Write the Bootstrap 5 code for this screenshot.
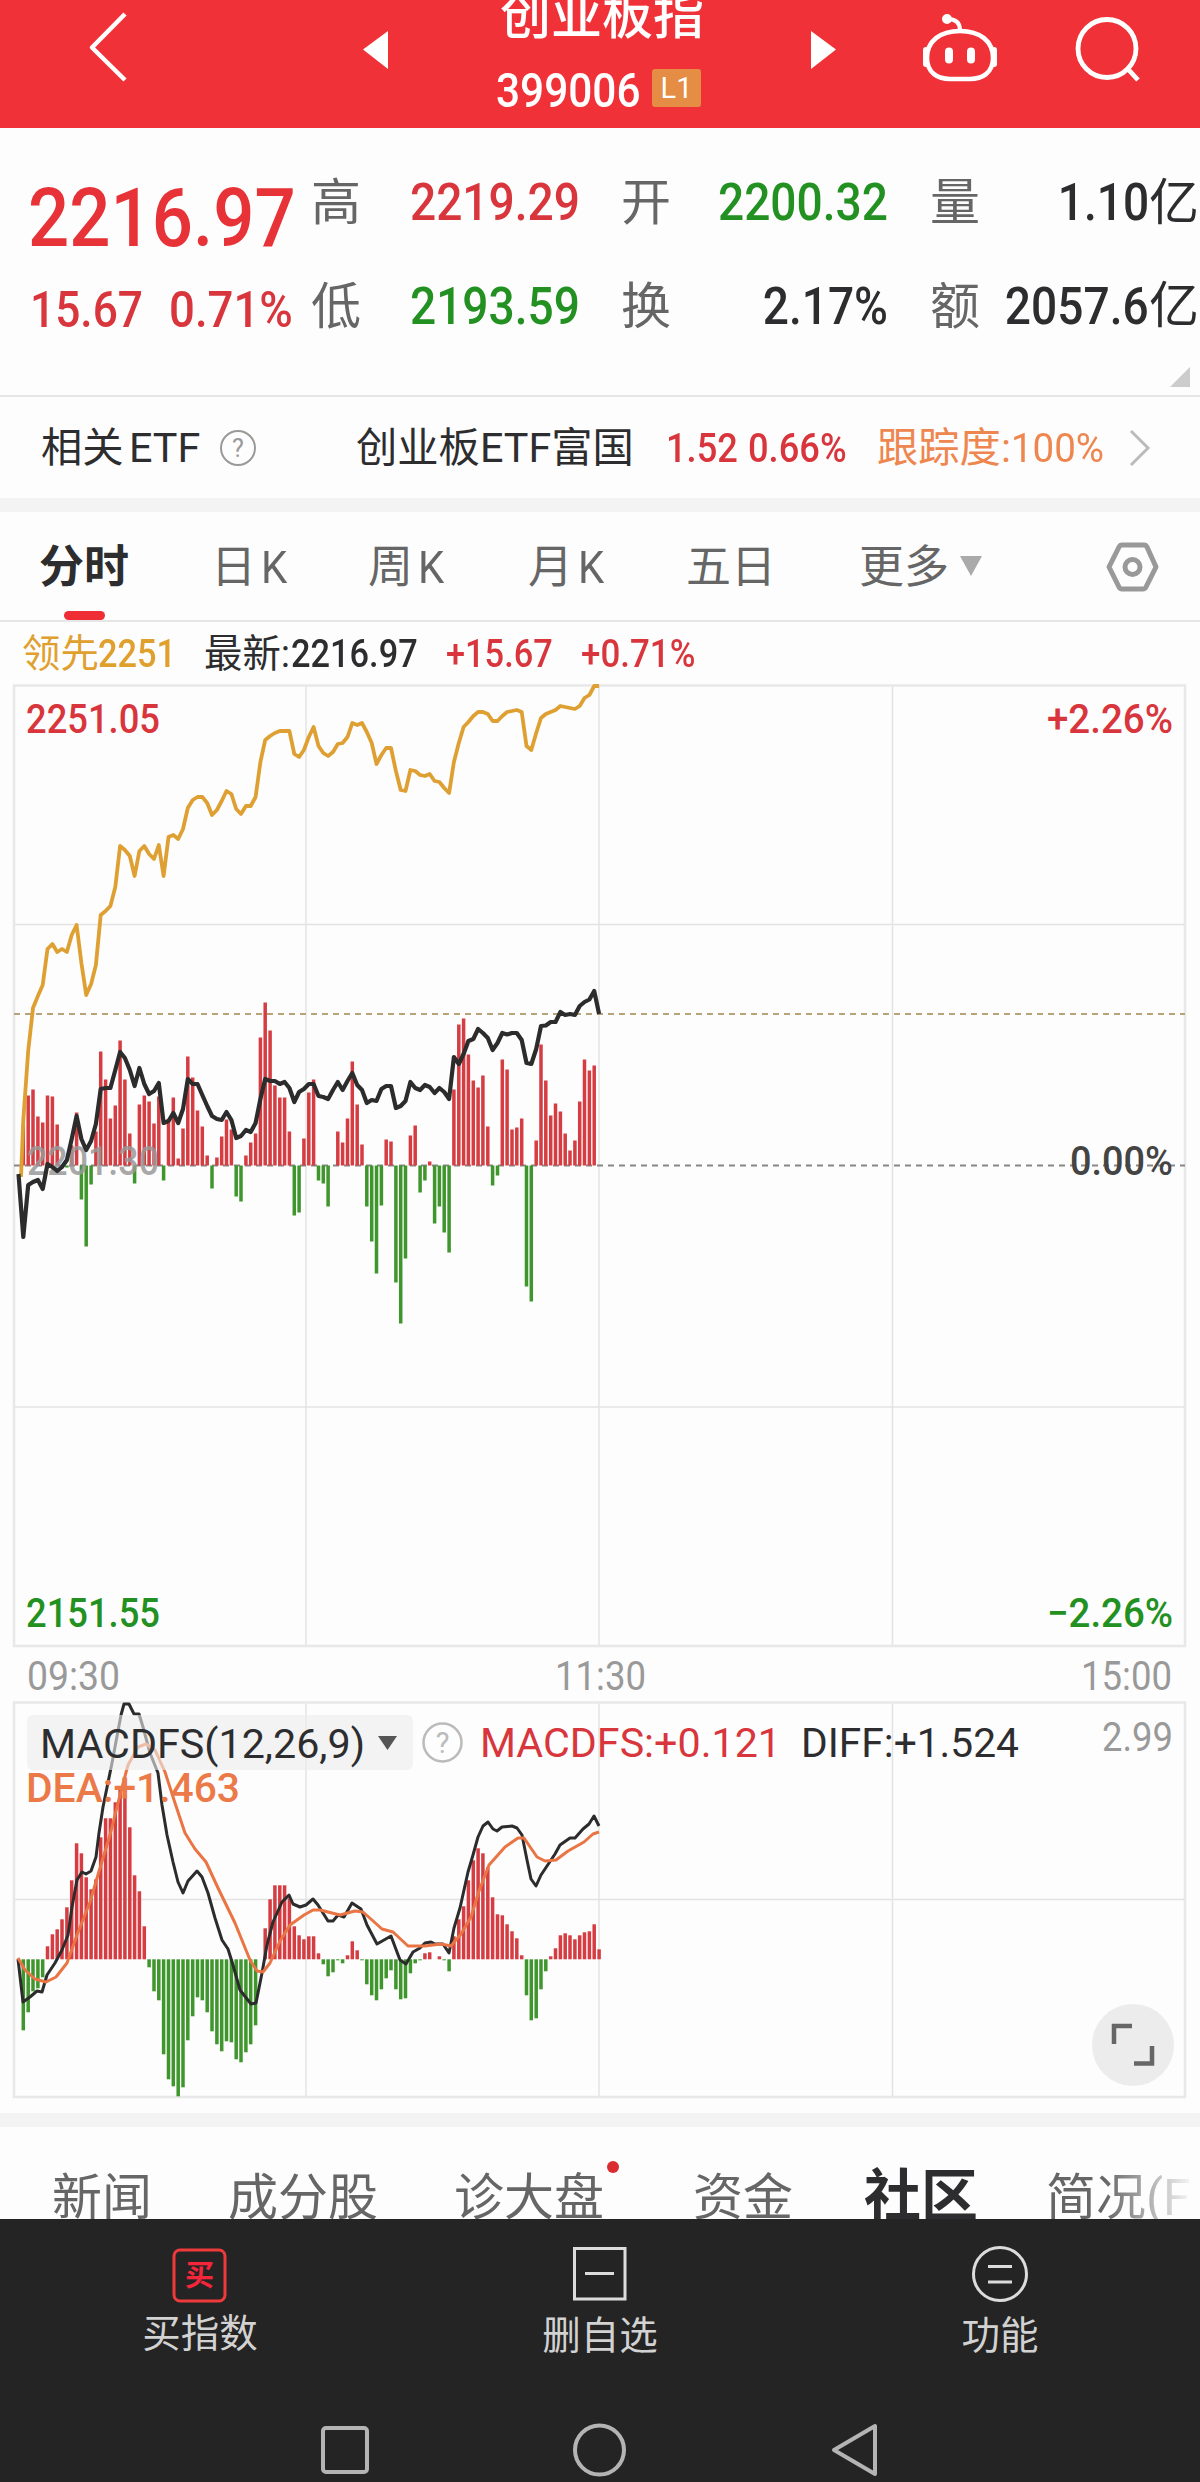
<!DOCTYPE html>
<html lang="zh-CN">
<head>
<meta charset="utf-8">
<meta name="viewport" content="width=device-width, initial-scale=1">
<title>创业板指 399006</title>
<link href="https://cdn.jsdelivr.net/npm/bootstrap@5.3.0/dist/css/bootstrap.min.css" rel="stylesheet">
<style>
body{width:1200px;height:2482px;overflow:hidden;background:#fdfdfd;font-family:Roboto,"Noto Sans CJK SC",sans-serif;line-height:1;color:#2d2d2f;white-space:nowrap}
svg{display:block;flex:none;overflow:visible}
svg text{font-family:Roboto,"Noto Sans CJK SC",sans-serif}
.up{color:#d8363c}.down{color:#239022}.dim{color:#666}.amber{color:#e0a02e}.coral{color:#ee8650}
.din{display:inline-block;transform:scaleX(.895);transform-origin:left center;font-weight:500}
.din-end{transform-origin:right center}
.topbar{height:128px;background:#f03238;color:#fff;display:grid;grid-template-columns:90px 273px 133px 205px 110px 118px 1fr}
.title-name{font-size:51px;font-weight:500;height:60px;margin-top:-11px;line-height:56px}
.title-code{font-size:49px;height:40px;line-height:44px;margin-top:20px}
.title-code .din{transform:scaleX(.865);font-weight:500;width:156px}
.lv{width:53px;height:38px;background:#e58c45;font-size:29px;line-height:39px;border-radius:3px;text-align:center}
.quote{height:269px;border-bottom:2px solid #e6e6e6;padding:23px 1px 0 28px;display:grid;grid-template-columns:283px 50px 219px 41px 50px 217px 42px 50px 1fr;grid-template-rows:104px 104px;align-items:center}
.quote .val{font-size:51.5px;text-align:right}
.quote .lab{font-size:50px;color:#666}
.quote .yi{font-size:50px}
.big{font-size:82px;height:52px;color:#e73337}
.big .din{transform:scaleX(.885)}
.chg{font-size:49.5px;padding:8px 0 0 2px}
.etf{height:101px;padding:2px 0 0 41px;display:grid;grid-template-columns:88px 92px 135px 310px 82px 129px 253px 1fr;align-items:center;font-size:41.3px}
.etf .din{font-size:40.500px}
.band{height:14px;background:#f3f3f3}
.periods{height:110px;border-bottom:2px solid #e6e6e6;padding:2px 0 0 39px;display:grid;grid-template-columns:172px 157px 160px 158px 173px 101px 146px 1fr;align-items:center;font-size:45px;color:#666}
.periods>.cur{color:#2d2d2f;font-weight:700;position:relative}
.periods>.cur::after{content:"";position:absolute;left:25px;top:66px;width:41px;height:9px;border-radius:5px;background:#ee2d34}
.periods .kk{margin-left:5px;display:inline-block;transform:scaleX(.93);transform-origin:left}
.legendbar{height:61px;padding:4px 0 0 22px;display:grid;grid-template-columns:76px 106px 92px 150px 135px 1fr;align-items:center;font-size:38.400px}
.sections{height:92px;overflow:hidden;padding:43px 0 0 52px;display:grid;grid-template-columns:176px 226px 239px 171px 182px 1fr;font-size:50px;color:#666;position:relative}
.sections>div{line-height:56px}
.sections .cur{font-size:57px;font-weight:700;color:#2d2d2f;line-height:53px}
.fade-tail{background:linear-gradient(90deg,#666 38%,#fdfdfd 97%);-webkit-background-clip:text;background-clip:text;color:transparent}
.reddot{position:absolute;left:607px;top:34px;width:12px;height:12px;border-radius:50%;background:#d92b30}
.actions{height:170px;background:#242424;color:#d2d2d2;font-size:38.5px;padding-top:26px}
.actions .lbl{margin-top:10px}
.actions .lbl-low{margin-top:12px}
.sysnav{height:93px;background:#242424}
</style>
<script src="https://cdn.jsdelivr.net/npm/bootstrap@5.3.0/dist/js/bootstrap.bundle.min.js"></script>
</head>
<body>
<header class="topbar">
  <div></div>
  <svg width="40" height="100" fill="none" stroke="#fff" stroke-width="4.5" stroke-linejoin="round"><path d="M35 14L2 47.500L35 80"/></svg>
  <svg width="26" height="100"><path d="M0 49.500L25 31V69Z" fill="#fff"/></svg>
  <div>
    <div class="title-name ps-1">创业板指</div>
    <div class="title-code d-flex"><span class="din">399006</span><span class="lv">L1</span></div>
  </div>
  <svg style="margin-left:110px" width="26" height="100"><path d="M0 31L25 49.500L0 69Z" fill="#fff"/></svg>
  <svg style="margin-left:107px" width="84" height="100" viewBox="921 0 84 100" fill="none" stroke="#fff"><path d="M963 31c20 0 33 10 33 27 0 15-11 21-23 21H953c-12 0-23-6-23-21 0-17 13-27 33-27Z" stroke-width="4.500"/><path d="M950 19q13 0 13 11" stroke-width="4"/><circle cx="950" cy="19" r="3" fill="#fff" stroke-width="4"/><path d="M952 51.500v8M974 51.500v8" stroke-width="8" stroke-linecap="round"/><path d="M929 50v14M997 50v14" stroke-width="6" stroke-linecap="round"/></svg>
  <svg style="margin-left:147px" width="64" height="100" viewBox="1071 0 64 100" fill="none" stroke="#fff" stroke-width="4.800"><circle cx="1102" cy="48.500" r="29"/><path d="M1122 68L1133 80"/></svg>
</header>

<section class="quote">
  <div class="big"><span class="din">2216.97</span></div>
  <div class="lab">高</div><div class="val up"><span class="din din-end">2219.29</span></div><i></i>
  <div class="lab">开</div><div class="val down"><span class="din din-end">2200.32</span></div><i></i>
  <div class="lab">量</div><div class="val"><span class="din din-end">1.10</span><span class="yi">亿</span></div>
  <div class="chg up d-flex"><span class="din" style="width:139px">15.67</span><span class="din" style="transform:scaleX(.92)">0.71%</span></div>
  <div class="lab">低</div><div class="val down"><span class="din din-end">2193.59</span></div><i></i>
  <div class="lab">换</div><div class="val"><span class="din din-end">2.17%</span></div><i></i>
  <div class="lab">额</div><div class="val d-flex justify-content-end"><span class="din din-end">2057.6</span><span class="yi">亿</span></div>
  <svg style="grid-column:1/-1;margin:2px 0 0 1141px" width="22" height="22"><path d="M21 0V20H1Z" fill="#ccc"/></svg>
</section>

<section class="etf">
  <span>相关</span><span>ETF</span>
  <svg style="margin-left:-1px" width="36" height="36" fill="none" stroke="#999" stroke-width="2"><circle cx="18" cy="17" r="17"/><text x="18" y="26" text-anchor="middle" font-size="25" fill="#999" stroke="none">?</text></svg>
  <span>创业板ETF富国</span>
  <span class="din up">1.52</span><span class="din up">0.66%</span>
  <span class="coral">跟踪度:<span class="din" style="font-weight:400;transform:scaleX(.95)">100%</span></span>
  <svg width="24" height="40" fill="none" stroke="#bbb" stroke-width="3"><path d="M1 2L18 19L1 36"/></svg>
</section>
<div class="band"></div>

<nav class="periods">
  <div class="cur">分时</div><div>日<span class="kk">K</span></div><div>周<span class="kk">K</span></div><div>月<span class="kk">K</span></div><div>五日</div><div>更多</div>
  <svg width="24" height="22"><path d="M0 0H22L11 20Z" fill="#aaa"/></svg>
  <svg width="54" height="52" fill="none" stroke="#999" stroke-width="5" stroke-linejoin="round"><path d="M16 4H38Q40 4 41 6L50 26L40 46Q39 48 37 48H16Q14 48 13 46L3 26L13 6Q14 4 16 4Z"/><circle cx="26.500" cy="26" r="7.500"/></svg>
</nav>

<div class="legendbar">
  <span class="amber">领先</span><span class="din amber">2251</span><span>最新:</span><span class="din" style="margin-left:-5px">2216.97</span><span class="din up">+15.67</span><span class="din up" style="transform:scaleX(.91)">+0.71%</span>
</div>

<svg id="price" width="1200" height="1005" viewBox="0 683 1200 1005" fill="none">
  <g stroke="#e3e3e3" stroke-width="1.500"><path d="M306 686V1646M599 686V1646M892.500 686V1646M14 924.500H1185M14 1407H1185"/><path d="M14 685.500H1185V1646H14Z" stroke-width="2.500" stroke="#e8e8e8"/></g>
  <path d="M14 1014H1185" stroke="#b6a377" stroke-width="2" stroke-dasharray="6 5"/>
  <path d="M14 1165.500H1185" stroke="#888" stroke-width="2" stroke-dasharray="6 5"/>
  <g class="bars"></g>
  <text x="27" y="1175" font-size="40" fill="#999" fill-opacity=".85" font-weight="500" textLength="132" lengthAdjust="spacingAndGlyphs">2201.30</text>
  <path class="lead-line" stroke="#dfa033" stroke-width="3.800" stroke-linejoin="round"/>
  <path class="last-line" stroke="#2c2c2c" stroke-width="4.200" stroke-linejoin="round"/>
  <g font-size="40" font-weight="500">
    <text x="26" y="733" fill="#d8363c" textLength="134" lengthAdjust="spacingAndGlyphs">2251.05</text>
    <text x="1047" y="733" fill="#d8363c" textLength="126" lengthAdjust="spacingAndGlyphs">+2.26%</text>
    <text x="1070" y="1175" fill="#444" textLength="103" lengthAdjust="spacingAndGlyphs">0.00%</text>
    <text x="26" y="1627" fill="#239022" textLength="134" lengthAdjust="spacingAndGlyphs">2151.55</text>
    <text x="1047" y="1627" fill="#239022" textLength="126" lengthAdjust="spacingAndGlyphs">−2.26%</text>
  </g>
  <g font-size="40" fill="#999">
    <text x="27" y="1690" textLength="93" lengthAdjust="spacingAndGlyphs">09:30</text>
    <text x="555" y="1690" textLength="91" lengthAdjust="spacingAndGlyphs">11:30</text>
    <text x="1081" y="1690" textLength="91" lengthAdjust="spacingAndGlyphs">15:00</text>
  </g>
</svg>

<svg id="macd" width="1200" height="425" viewBox="0 1688 1200 425" fill="none">
  <g stroke="#e3e3e3" stroke-width="1.500"><path d="M306 1702V2097M599 1702V2097M892.500 1702V2097M14 1899.500H1185"/><path d="M14 1702.500H1185V2097H14Z" stroke-width="2.500" stroke="#e8e8e8"/></g>
  <g class="bars"></g>
  <path stroke="#2c2c2c" stroke-width="3" stroke-linejoin="round" d="M18 1959L23 2002L30 1997L37 1991L42 1992L47 1975L55 1963L62 1950L68 1935L72 1907L77 1880L82 1872L86 1874L91 1871L96 1857L99 1833L103 1807L112 1763L121 1715L124 1704L129 1704L134 1714L139 1714L143 1727L150 1753L158 1773L162 1805L167 1835L173 1862L178 1882L183 1893L188 1881L197 1871L202 1877L208 1893L215 1918L222 1940L228 1949L233 1965L240 1990L251 2004L256 2003L262 1973L267 1945L273 1922L282 1902L289 1895L293 1904L300 1907L306 1905L313 1899L318 1905L328 1921L333 1921L338 1915L344 1917L352 1903L361 1909L367 1925L377 1944L391 1936L400 1960L406 1964L413 1952L420 1948L425 1943L431 1942L435 1944L443 1944L449 1953L454 1928L460 1908L468 1872L473 1855L478 1837L483 1826L488 1822L493 1829L497 1831L502 1827L512 1826L517 1828L522 1835L527 1860L531 1879L536 1886L541 1875L555 1854L560 1845L570 1838L575 1838L583 1829L589 1824L594 1816L599 1826"/>
  <path stroke="#ea7544" stroke-width="3" stroke-linejoin="round" d="M18 1958L25 1970L35 1979L46 1982L56 1977L67 1963L77 1935L90 1902L100 1868L110 1835L120 1795L128 1765L138 1747L146 1744L155 1750L165 1772L175 1803L185 1833L195 1849L206 1862L218 1888L235 1923L250 1960L257 1971L263 1972L270 1963L280 1941L290 1925L304 1915L313 1910L320 1910L340 1915L355 1911L363 1912L372 1920L382 1929L393 1932L408 1946L425 1946L441 1944L451 1946L461 1934L471 1917L479 1891L489 1865L505 1847L518 1838L524 1838L537 1857L545 1861L556 1860L568 1851L584 1842L593 1834L599 1832"/>
  <rect x="27" y="1715" width="386" height="55" rx="6" fill="#ececec" fill-opacity=".6"/>
  <path d="M378 1736H397L387.500 1750Z" fill="#555"/>
  <circle cx="442.500" cy="1742.500" r="19" stroke="#bbb" stroke-width="2.500"/>
  <g font-size="41">
    <text x="442.500" y="1753" font-size="29" text-anchor="middle" fill="#bbb">?</text>
    <text x="40" y="1758" fill="#2d2d2f" textLength="325" lengthAdjust="spacingAndGlyphs">MACDFS(12,26,9)</text>
    <text x="480" y="1757" fill="#d8363c" textLength="301" lengthAdjust="spacingAndGlyphs">MACDFS:+0.121</text>
    <text x="801" y="1757" fill="#2d2d2f" textLength="218" lengthAdjust="spacingAndGlyphs">DIFF:+1.524</text>
    <text x="1102" y="1751" fill="#999" textLength="71" lengthAdjust="spacingAndGlyphs">2.99</text>
    <text x="26" y="1802" fill="#ec7a48" font-weight="500" textLength="214" lengthAdjust="spacingAndGlyphs">DEA:+1.463</text>
  </g>
  <circle cx="1133" cy="2045" r="41" fill="#ececec"/>
  <path d="M1132 2026H1114V2044M1134 2063.500H1152V2046" stroke="#666" stroke-width="4.500"/>
</svg>
<div class="band"></div>

<nav class="sections">
  <div>新闻</div><div>成分股</div><div>诊大盘</div><div>资金</div><div class="cur">社区</div><div class="fade-tail">简况(F</div>
  <span class="reddot"></span>
</nav>

<footer>
  <div class="actions d-flex text-center">
    <div class="col-4 d-flex flex-column align-items-center"><svg width="60" height="60"><rect x="4" y="5" width="51" height="51" rx="6" fill="none" stroke="#ef3a3c" stroke-width="3"/><text x="29.500" y="41" font-size="29" font-weight="700" text-anchor="middle" fill="#f5253a">买</text></svg><div class="lbl">买指数</div></div>
    <div class="col-4 d-flex flex-column align-items-center"><svg width="60" height="60" fill="none" stroke="#dcdcdc" stroke-width="3"><path d="M4.500 3.500H55V54H4.500ZM15 28.500H44"/></svg><div class="lbl lbl-low">删自选</div></div>
    <div class="col-4 d-flex flex-column align-items-center"><svg width="60" height="60" fill="none" stroke="#dcdcdc" stroke-width="3"><circle cx="30" cy="29" r="26.500"/><path d="M18 21.500H42M18 37H42"/></svg><div class="lbl lbl-low">功能</div></div>
  </div>
  <div class="sysnav"><svg width="1200" height="93" viewBox="0 2389 1200 93" fill="none" stroke="#b4b4b4" stroke-width="4" stroke-linejoin="round"><rect x="323" y="2428" width="44" height="44" rx="3"/><circle cx="599.500" cy="2450" r="24.500"/><path d="M834 2450L875 2426V2474Z"/></svg></div>
</footer>

<script>
const X0 = 18.5, STEP = 4.838;
const px = i => (X0 + STEP * i).toFixed(1);
function bars(id, base, data) {
  document.querySelector(id + ' .bars').innerHTML = data.map((h, i) => h ?
    `<rect x="${px(i) - 1.75}" y="${h > 0 ? base - h : base}" width="3.5" height="${Math.abs(h)}" fill="${h > 0 ? '#d53d42' : '#3f962d'}"/>` : '').join('');
}
function line(sel, ys, first) {
  document.querySelector(sel).setAttribute('d', ys.map((y, i) => (i ? 'L' : 'M') + (i ? px(i) : first) + ' ' + y).join(''));
}
bars('#price', 1165.5, [0,41,70,76,49,43,70,69,41,0,-2,20,53,-34,-81,-19,34,114,86,47,60,125,86,32,-18,61,70,64,42,69,-15,46,68,7,37,109,88,55,39,10,-23,8,29,46,36,-31,-36,10,23,32,128,163,135,80,68,68,34,-50,-47,27,73,86,-15,-18,-41,0,34,23,47,104,61,21,-41,-76,-108,-40,26,24,-117,-158,-93,30,40,-27,-15,4,-58,-41,-67,-87,76,141,147,111,85,78,90,39,-20,-10,106,96,36,38,47,-121,-136,25,121,85,50,62,54,32,15,25,64,106,95,100]);
bars('#macd', 1959.3, [0,-71,-53,-32,-29,-18,13,25,30,40,52,79,116,106,82,70,80,122,141,141,157,173,164,132,84,68,33,-8,-32,-41,-95,-120,-127,-137,-128,-81,-57,-38,-41,-53,-72,-85,-92,-82,-83,-100,-103,-93,-85,-66,0,31,60,74,74,74,61,33,24,20,23,23,6,-5,-17,-13,-1,-4,4,18,9,-1,-25,-36,-41,-30,-19,-11,-30,-40,-39,-14,-4,-1,6,7,0,3,-1,-12,23,40,53,79,99,111,106,92,62,45,44,35,28,21,4,-36,-61,-59,-30,-12,3,11,24,26,24,20,24,27,28,35,10]);
line('.lead-line', [1177,1120,1051,1008,996,985,949,944,952,949,952,935,925,963,995,984,965,915,911,906,887,846,850,856,876,851,846,854,859,845,876,837,835,839,829,808,800,797,797,803,815,810,801,791,794,809,814,806,806,797,762,740,736,733,731,731,731,754,757,750,737,727,746,753,756,752,744,743,737,723,725,723,732,743,764,755,748,748,771,790,791,770,771,775,776,774,781,782,788,793,762,743,727,722,716,712,712,714,721,721,716,712,711,710,712,746,750,733,718,714,712,710,706,707,708,709,706,698,695,686,686], 21);
line('.last-line', [1174,1237,1185,1182,1180,1189,1164,1167,1171,1167,1160,1139,1116,1139,1150,1141,1124,1089,1088,1088,1070,1052,1058,1070,1086,1068,1084,1094,1091,1083,1123,1121,1113,1123,1109,1079,1084,1084,1095,1106,1116,1119,1120,1112,1120,1138,1136,1130,1132,1123,1099,1079,1081,1081,1084,1082,1088,1102,1092,1089,1084,1084,1096,1097,1099,1090,1082,1090,1081,1073,1085,1090,1103,1100,1101,1089,1086,1086,1108,1106,1101,1082,1088,1090,1085,1087,1093,1088,1092,1099,1057,1064,1054,1041,1039,1029,1033,1038,1050,1043,1033,1034.5,1033,1033,1040,1063,1064,1049,1026,1025.5,1022,1022,1012,1015,1014,1015,1006,1002,999.5,991,1014], 18.5);
</script>
</body>
</html>
